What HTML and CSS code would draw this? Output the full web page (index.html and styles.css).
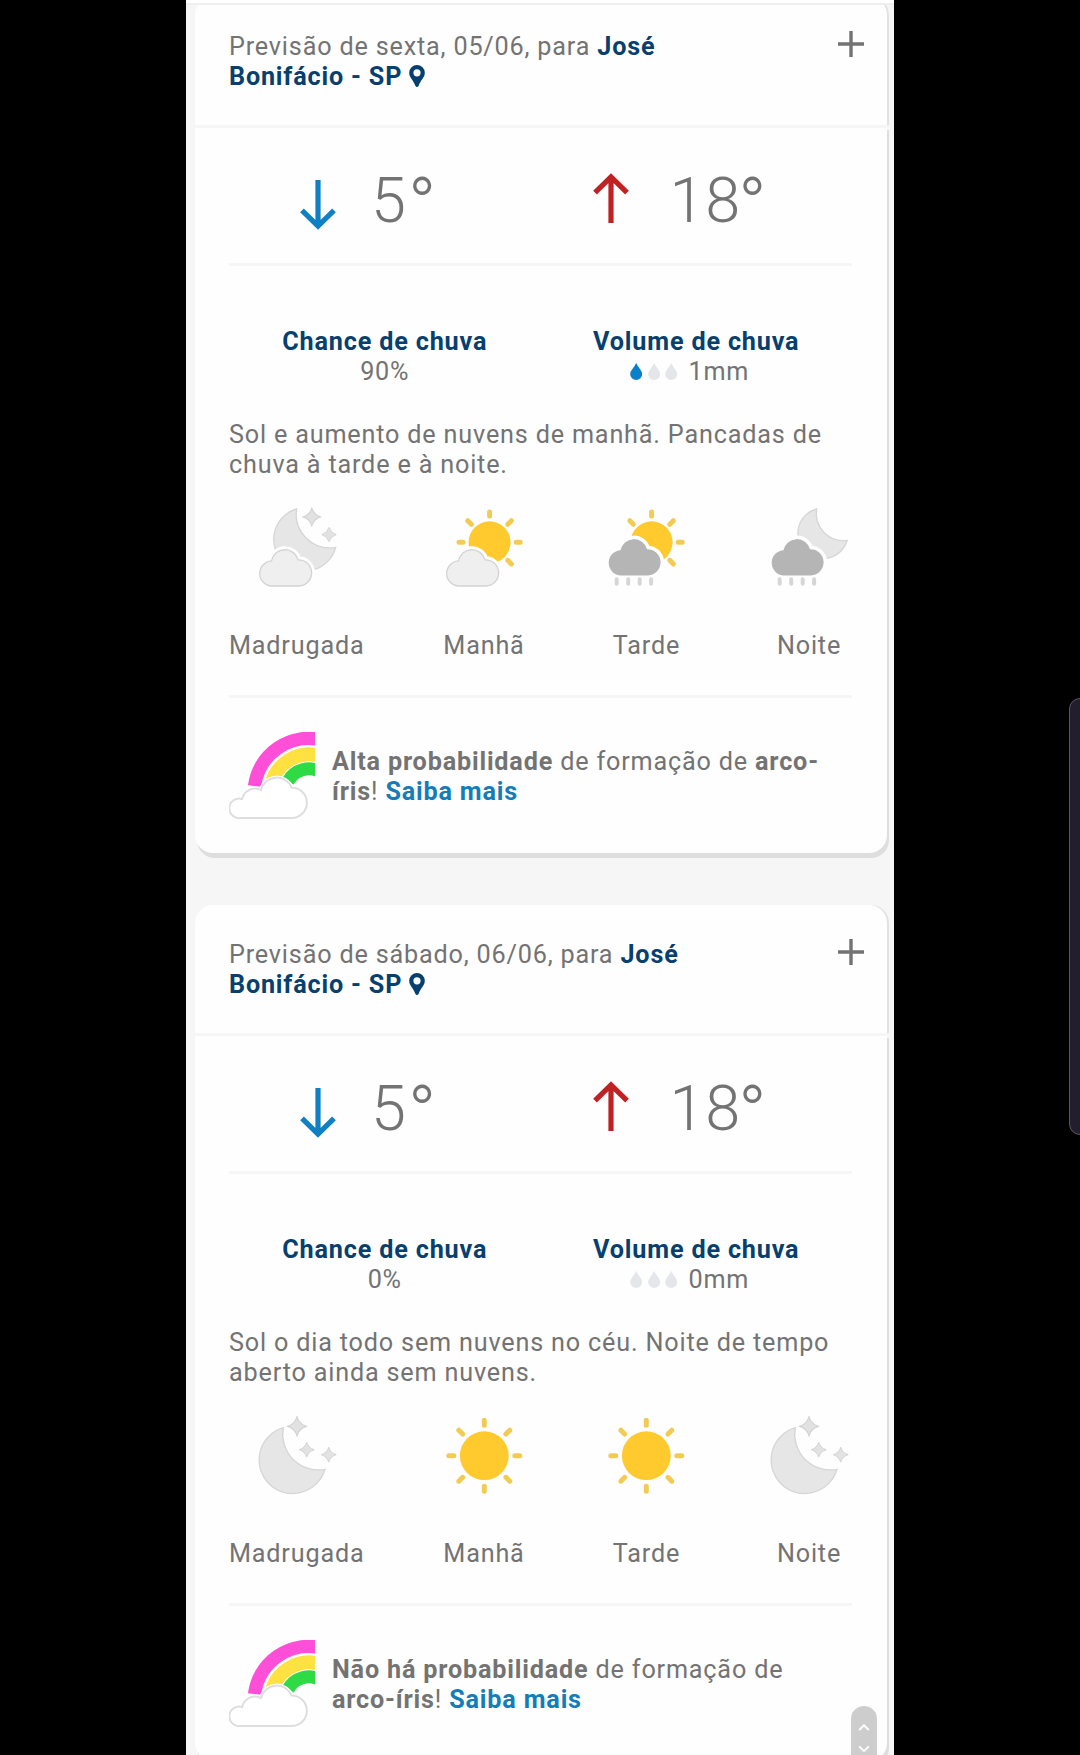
FILE: index.html
```html
<!DOCTYPE html>
<html lang="pt-BR">
<head>
    <meta charset="UTF-8">
    <meta name="viewport" content="width=device-width, initial-scale=1.0">
    <title>Previsão do tempo - José Bonifácio</title>
    <link rel="stylesheet" href="styles.css">
</head>
<body>

    <svg class="sprite" xmlns="http://www.w3.org/2000/svg">
        <symbol id="pin" viewBox="0 0 16 22">
            <path fill-rule="evenodd" d="M8 0A7.8 7.8 0 0 0 .2 7.8C.2 12.5 4 14.5 6.3 20.8Q8 23.2 9.7 20.8C12 14.5 15.8 12.5 15.8 7.8A7.8 7.8 0 0 0 8 0ZM8 4.2A3.6 3.6 0 1 1 8 11.4A3.6 3.6 0 1 1 8 4.2Z"/>
        </symbol>
        <symbol id="drop" viewBox="0 0 12 17">
            <path d="M6 0C8 4.5 12 7.5 12 11.2A6 5.8 0 0 1 0 11.2C0 7.5 4 4.5 6 0Z"/>
        </symbol>
        <symbol id="arrow" viewBox="0 0 36 50">
            <path d="M18 0V46M2 30.3L18 46.2L34 30.3" fill="none" stroke="currentColor" stroke-width="5.2"/>
        </symbol>
        <symbol id="plus" viewBox="0 0 26 26">
            <path d="M13 0V26M0 13H26" stroke="currentColor" stroke-width="3.4"/>
        </symbol>
        <symbol id="cloud" viewBox="0 0 86 86">
            <path d="M17 82A12.65 12.65 0 0 1 17.5 56.8A13.6 13.6 0 0 1 44 55.8A13.1 13.1 0 0 1 45 82Z"/>
        </symbol>
        <symbol id="star" viewBox="-10 -10 20 20">
            <path d="M0 -9Q2 -2 9 0Q2 2 0 9Q-2 2 -9 0Q-2 -2 0 -9Z" fill="#e2e2e2" stroke="#d2d2d2" stroke-width="1.2"/>
        </symbol>

        <symbol id="moon-cloud" viewBox="0 0 86 86">
            <path class="moon" d="M42.7 5A31.5 31.5 0 1 0 81.7 43.3A33.6 33.6 0 0 1 42.7 5Z"/>
            <use href="#star" x="48" y="3.2" width="19.6" height="19.6"/>
            <use href="#star" x="67" y="22.6" width="16" height="16"/>
            <use href="#cloud" class="cloud-gap" width="86" height="86"/>
            <use href="#cloud" class="cloud-light" width="86" height="86"/>
        </symbol>
        <symbol id="sun-rays" viewBox="0 0 86 86">
            <circle cx="48.6" cy="38.3" r="21" fill="#ffca2e"/>
            <path class="rays" d="M48.6 8V12M75.2 38.3H79.2M66.8 20.3L70.4 16.7M30.4 20.3L26.8 16.7M66.8 56.3L70.4 59.9"/>
        </symbol>
        <symbol id="sun-cloud" viewBox="0 0 86 86">
            <use href="#sun-rays" width="86" height="86"/>
            <path class="rays" d="M18 38.3H22"/>
            <use href="#cloud" class="cloud-gap" width="86" height="86"/>
            <use href="#cloud" class="cloud-light" width="86" height="86"/>
        </symbol>
        <symbol id="rain" viewBox="0 0 86 86">
            <use href="#cloud" class="cloud-gap" y="-10.6" width="86" height="86"/>
            <use href="#cloud" class="cloud-dark" y="-10.6" width="86" height="86"/>
            <path d="M13.7 75.3V79.8M25.2 75.3V79.8M36.7 75.3V79.8M48.1 75.3V79.8" stroke="#d6d6d6" stroke-width="4" stroke-linecap="round"/>
        </symbol>
        <symbol id="sun-rain" viewBox="0 0 86 86">
            <use href="#sun-rays" width="86" height="86"/>
            <use href="#rain" width="86" height="86"/>
        </symbol>
        <symbol id="moon-rain" viewBox="0 0 86 86">
            <path class="moon" d="M50.7 5A25.2 25.2 0 1 0 81.3 36.3A27 27 0 0 1 50.7 5Z"/>
            <use href="#rain" width="86" height="86"/>
        </symbol>
        <symbol id="moon" viewBox="0 0 86 86">
            <path class="moon" d="M29.3 15.7A33.6 33.6 0 1 0 71 57.3A35.7 35.7 0 0 1 29.3 15.7Z"/>
            <use href="#star" x="32.6" y="3.9" width="20.8" height="20.8"/>
            <use href="#star" x="44.4" y="29.4" width="16.6" height="16.6"/>
            <use href="#star" x="66.4" y="34.4" width="16.6" height="16.6"/>
        </symbol>
        <symbol id="sun" viewBox="0 0 86 86">
            <circle cx="43.3" cy="43.7" r="24.4" fill="#ffca2e"/>
            <path class="rays" d="M43.3 8.2V13.2M43.3 74.2V79.2M7.8 43.7H12.8M73.8 43.7H78.8M64.9 22.1L68.8 18.2M21.7 22.1L17.8 18.2M64.9 65.3L68.8 69.2M21.7 65.3L17.8 69.2"/>
        </symbol>
        <symbol id="rainbow" viewBox="0 0 86 87">
            <g fill="none">
                <path d="M25.6 54A54.4 54.4 0 0 1 92 7.9" stroke="#ff4fd8" stroke-width="13.4"/>
                <path d="M42 55A38.5 38.5 0 0 1 92 24.4" stroke="#ffe141" stroke-width="14"/>
                <path d="M59 49.3A24 24 0 0 1 92 40.1" stroke="#2fdb45" stroke-width="13"/>
            </g>
            <path d="M11.6 86A9.8 9.8 0 1 1 13.2 67A13 13 0 0 1 32 58A16.2 16.2 0 0 1 62.7 55.6A15.2 15.2 0 0 1 62.7 86Z" fill="#fff" stroke="#fff" stroke-width="4"/>
            <path d="M11.6 86A9.8 9.8 0 1 1 13.2 67A13 13 0 0 1 32 58A16.2 16.2 0 0 1 62.7 55.6A15.2 15.2 0 0 1 62.7 86Z" fill="#fff" stroke="#dedede" stroke-width="2"/>
        </symbol>
    </svg>

    <main class="screen">
        <div class="top-strip"></div>

        <section class="card">
            <header class="card-header">
                <p class="card-title">Previsão de sexta, 05/06, para <strong>José<br>Bonifácio - SP</strong> <svg class="pin"><use href="#pin"/></svg></p>
                <svg class="plus"><use href="#plus"/></svg>
            </header>
            <div class="card-body">
                <div class="temps">
                    <div class="temp temp-min"><svg class="arrow"><use href="#arrow"/></svg><span>5<span class="deg">°</span></span></div>
                    <div class="temp temp-max"><svg class="arrow"><use href="#arrow"/></svg><span>18<span class="deg">°</span></span></div>
                </div>
                <div class="rain">
                    <div><strong>Chance de chuva</strong><br>90%</div>
                    <div>
                        <strong>Volume de chuva</strong>
                        <div class="volume">
                            <svg class="drop filled"><use href="#drop"/></svg>
                            <svg class="drop"><use href="#drop"/></svg>
                            <svg class="drop"><use href="#drop"/></svg>
                            <span>1mm</span>
                        </div>
                    </div>
                </div>
                <p class="summary">Sol e aumento de nuvens de manhã. Pancadas de chuva à tarde e à noite.</p>
                <div class="periods">
                    <div class="period"><svg><use href="#moon-cloud"/></svg><span>Madrugada</span></div>
                    <div class="period"><svg><use href="#sun-cloud"/></svg><span>Manhã</span></div>
                    <div class="period"><svg><use href="#sun-rain"/></svg><span>Tarde</span></div>
                    <div class="period"><svg><use href="#moon-rain"/></svg><span>Noite</span></div>
                </div>
                <div class="rainbow">
                    <svg><use href="#rainbow"/></svg>
                    <p><b>Alta probabilidade</b> de formação de <b>arco-<br>íris</b>! <a>Saiba mais</a></p>
                </div>
            </div>
        </section>

        <section class="card">
            <header class="card-header">
                <p class="card-title">Previsão de sábado, 06/06, para <strong>José<br>Bonifácio - SP</strong> <svg class="pin"><use href="#pin"/></svg></p>
                <svg class="plus"><use href="#plus"/></svg>
            </header>
            <div class="card-body">
                <div class="temps">
                    <div class="temp temp-min"><svg class="arrow"><use href="#arrow"/></svg><span>5<span class="deg">°</span></span></div>
                    <div class="temp temp-max"><svg class="arrow"><use href="#arrow"/></svg><span>18<span class="deg">°</span></span></div>
                </div>
                <div class="rain">
                    <div><strong>Chance de chuva</strong><br>0%</div>
                    <div>
                        <strong>Volume de chuva</strong>
                        <div class="volume">
                            <svg class="drop"><use href="#drop"/></svg>
                            <svg class="drop"><use href="#drop"/></svg>
                            <svg class="drop"><use href="#drop"/></svg>
                            <span>0mm</span>
                        </div>
                    </div>
                </div>
                <p class="summary">Sol o dia todo sem nuvens no céu. Noite de tempo aberto ainda sem nuvens.</p>
                <div class="periods">
                    <div class="period"><svg><use href="#moon"/></svg><span>Madrugada</span></div>
                    <div class="period"><svg><use href="#sun"/></svg><span>Manhã</span></div>
                    <div class="period"><svg><use href="#sun"/></svg><span>Tarde</span></div>
                    <div class="period"><svg><use href="#moon"/></svg><span>Noite</span></div>
                </div>
                <div class="rainbow">
                    <svg><use href="#rainbow"/></svg>
                    <p><b>Não há probabilidade</b> de formação de <b class="nowrap">arco-íris</b>! <a>Saiba mais</a></p>
                </div>
            </div>
        </section>

        <div class="scroll-thumb">
            <svg viewBox="0 0 26 49"><path d="M8.2 24L13 19.2L17.8 24M8.2 40.4L13 45.2L17.8 40.4" fill="none" stroke="#fff" stroke-width="2"/></svg>
        </div>
    </main>

    <div class="edge-handle"></div>

</body>
</html>
```

FILE: styles.css
```css
* {
    box-sizing: border-box;
}

body {
    margin: 0;
    height: 1755px;
    position: relative;
    overflow: hidden;
    background-color: #000;
    color: #737373;
    font-family: Roboto, "Liberation Sans", sans-serif;
    font-size: 25.2px;
    line-height: 29.6px;
    letter-spacing: 0.82px;
}

p {
    margin: 0;
}

svg {
    display: block;
    flex-shrink: 0;
}

strong {
    color: #07406f;
}

.sprite {
    position: absolute;
    width: 0;
    height: 0;
}

.screen {
    position: relative;
    width: 708px;
    height: 1755px;
    margin-left: 186px;
    padding: 0 7px 0 9px;
    overflow: hidden;
    background-color: #f6f6f6;
}

.top-strip {
    position: absolute;
    top: 0;
    left: 0;
    width: 100%;
    height: 5px;
    background-color: #fff;
    border-bottom: 2px solid #efeff0;
}

.card {
    width: 692px;
    margin-top: -3px;
    margin-bottom: 55px;
}

.card-header {
    display: flex;
    justify-content: space-between;
    height: 128px;
    padding: 34px 23px 0 34px;
    background-color: #fefefe;
    border-radius: 18px 18px 0 0;
    box-shadow: 2px 0 0 #e2e2e3;
}

.card-title {
    width: 480px;
    padding-top: 1px;
}

.pin {
    display: inline-block;
    width: 16px;
    height: 22px;
    vertical-align: -2px;
    fill: #07406f;
}

.plus {
    width: 26px;
    height: 26px;
}

.card-body {
    height: 728px;
    padding: 0 35px 0 34px;
    background-color: #fefefe;
    border-top: 3px solid #f6f6f6;
    border-radius: 0 0 18px 18px;
    box-shadow: 2px 5px 0 #dedede;
}

.temps {
    display: grid;
    grid-template-columns: 1fr 1fr;
    height: 138px;
    padding-top: 36px;
    border-bottom: 3px solid #f6f6f6;
}

.temp {
    display: flex;
    align-items: flex-start;
    font-size: 63px;
    font-weight: 300;
    line-height: 74px;
}

.deg {
    font-size: 76px;
    line-height: 0;
    vertical-align: -9px;
}

.arrow {
    width: 36px;
    height: 50px;
}

.temp-min {
    padding-left: 71px;
    gap: 35px;
}

.temp-min .deg {
    margin-left: 1px;
}

.temp-min .arrow {
    margin-top: 16px;
    color: #0f80c4;
}

.temp-max {
    padding-left: 52px;
    gap: 41px;
}

.temp-max .deg {
    margin-left: -3px;
}

.temp-max .arrow {
    margin-top: 9px;
    color: #c02224;
    transform: rotate(180deg);
}

.rain {
    display: grid;
    grid-template-columns: 1fr 1fr;
    padding-top: 61px;
    text-align: center;
}

.volume {
    display: flex;
    justify-content: center;
    align-items: center;
    gap: 5px;
    padding-right: 13px;
}

.volume span {
    margin-left: 6px;
}

.drop {
    width: 12.4px;
    height: 17px;
    fill: #e4e6ea;
}

.drop.filled {
    fill: #0a7fca;
}

.summary {
    margin-top: 33.8px;
}

.periods {
    display: flex;
    justify-content: space-between;
    height: 218.8px;
    padding-top: 24.4px;
    border-bottom: 3px solid #f6f6f6;
}

.period {
    display: flex;
    flex-direction: column;
    align-items: center;
}

.period svg {
    width: 86px;
    height: 86px;
    margin-bottom: 41.6px;
}

.moon {
    fill: #e6e6e6;
    stroke: #d6d6d6;
    stroke-width: 1.3;
}

.rays {
    fill: none;
    stroke: #f2cb55;
    stroke-width: 5;
    stroke-linecap: round;
}

.cloud-gap {
    fill: #fefefe;
    stroke: #fefefe;
    stroke-width: 7;
}

.cloud-light {
    fill: #efefef;
    stroke: #d3d3d3;
    stroke-width: 1.3;
}

.cloud-dark {
    fill: #b5b5b5;
}

.rainbow {
    display: flex;
    align-items: center;
    gap: 17px;
    padding-top: 34px;
}

.rainbow svg {
    width: 86px;
    height: 87px;
}

.rainbow p {
    padding-top: 3px;
}

.rainbow a {
    color: #147db8;
    font-weight: bold;
}

.nowrap {
    white-space: nowrap;
}

.scroll-thumb {
    position: absolute;
    left: 665px;
    bottom: 0;
    width: 26px;
    height: 49px;
    border-radius: 13px 13px 0 0;
    background-color: #cdcdcd;
}

.edge-handle {
    position: absolute;
    top: 698px;
    right: -12px;
    width: 23px;
    height: 437px;
    border: 1px solid #5a5662;
    border-radius: 11px;
    background-color: #231e2e;
}
```
